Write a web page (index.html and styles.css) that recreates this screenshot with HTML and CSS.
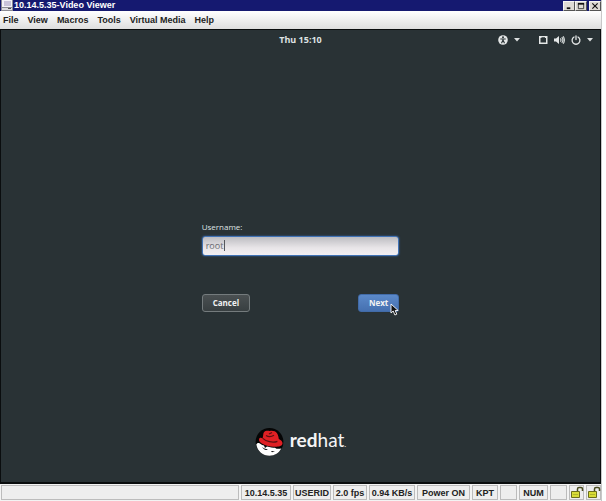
FILE: index.html
```html
<!DOCTYPE html>
<html lang="en">
<head>
<meta charset="utf-8">
<title>10.14.5.35-Video Viewer</title>
<link rel="stylesheet" href="styles.css">
</head>
<body>
<div class="window">
  <header class="titlebar">
    <svg class="app-icon" width="12" height="11" viewBox="0 0 12 11" aria-hidden="true"><path fill="#8b8b93" d="M0 0h12v11H0z"/><path fill="#f4f3f8" d="M1 0h10v7H1z"/><path fill="#c9c4da" d="M3 1h7v5H3z"/><path fill="#dcdce0" d="M1 8h10v2H1z"/><path fill="#555" d="M7 8h3v1H7z"/></svg>
    <h1 class="title">10.14.5.35-Video Viewer</h1>
    <div class="controls">
      <button class="control" aria-label="Minimize"><svg width="11" height="9" viewBox="0 0 11 9"><path fill="#111" d="M3 6h4v2H3z"/></svg></button>
      <button class="control" aria-label="Maximize"><svg width="11" height="9" viewBox="0 0 11 9"><path fill="none" stroke="#333" d="M2.500 2v5.500h6V2"/><path fill="#111" d="M2 1h7v2H2z"/></svg></button>
      <button class="control control-close" aria-label="Close"><svg width="11" height="9" viewBox="0 0 11 9"><path fill="none" stroke="#111" stroke-width="1.300" d="M2.500 1.500l6 6m0-6l-6 6"/></svg></button>
    </div>
  </header>
  <nav class="menubar">
    <button>File</button><button>View</button><button>Macros</button><button>Tools</button><button>Virtual Media</button><button>Help</button>
  </nav>
  <div class="desktop">
    <div class="topbar">
      <time class="clock">Thu 15:10</time>
      <div class="tray">
        <button class="tray-item" aria-label="Accessibility">
          <svg width="10" height="10" viewBox="0 0 10 10"><circle cx="5" cy="5" r="4.800" fill="#e4e7e7"/><circle cx="5" cy="2.200" r="1" fill="#293235"/><path fill="none" stroke="#293235" stroke-width="1.100" d="M2.300 4h5.400M5 3.500v2.300M5 5L3.500 8.300M5 5l1.500 3.300"/></svg>
          <svg width="6" height="4" viewBox="0 0 6 4"><path fill="#dde0e0" d="M0 0h6L3 3.500z"/></svg>
        </button>
        <button class="tray-item" aria-label="System">
          <svg width="10" height="10" viewBox="0 0 10 10"><path fill="#e4e7e7" fill-rule="evenodd" d="M1 1h8.500v8H1zM2.500 3v4.500H8V3H7V2.300H3.500V3z"/></svg>
          <svg width="11" height="10" viewBox="0 0 11 10"><path fill="#e4e7e7" d="M0 3.500h2L5 1v8L2 6.500H0z"/><path fill="none" stroke="#d0d5d5" stroke-width="1.200" d="M6.300 3.300q1.400 1.700 0 3.400M7.800 2.200q2.200 2.800 0 5.600M9.200 1.200q2.400 3.800 0 7.600"/></svg>
          <svg width="10" height="10" viewBox="0 0 10 10"><path fill="none" stroke="#e4e7e7" stroke-width="1.300" stroke-linecap="round" d="M3 2a3.900 3.900 0 1 0 4 0M5 .8v3.700"/></svg>
          <svg width="6" height="4" viewBox="0 0 6 4"><path fill="#dde0e0" d="M0 0h6L3 3.500z"/></svg>
        </button>
      </div>
    </div>
    <main class="greeter">
      <form class="login">
        <label for="username">Username:</label>
        <div class="field"><input id="username" type="text" value="root"><span class="caret"></span></div>
        <div class="actions">
          <button class="btn" type="button">Cancel</button>
          <button class="btn btn-primary" type="button">Next<svg class="pointer" width="10" height="13" viewBox="0 0 10 13" aria-hidden="true"><path fill="#111" stroke="#fff" stroke-width=".9" d="M1 1v9l2.200-2 1.700 4 1.900-.8L5.200 7.500h3z"/></svg></button>
        </div>
      </form>
      <div class="brand">
        <svg width="30" height="30" viewBox="0 0 30 30" aria-hidden="true"><circle cx="14.500" cy="14.800" r="13.900" fill="#050505"/><path fill="#fff" d="M1.300 17.500c.5-1.500 2-2 3.200-1.200 1.500 1 3 2 4.500 2.300l1 2.400 2-1.500c3 1 6 1.200 8 1.200 1.500 1.500 4 1.300 6.300.8C24 26 20 28.700 14.500 28.700 8 28.700 2.500 24.500 1.300 17.500z"/><path fill="#050505" d="M7 20c2 1.600 4 2.100 6 2.300l-1.800.8C9.500 22.800 8 21.500 7 20zM16 24l4 .3-3 1z"/><path fill="#df2024" d="M8.500 6C10 3.200 13 4 15 3.900c3-.3 5.500.2 7 2.400 1.300 2 1.500 4 1.800 5.700 2.500 1 4 3 3.700 4.800-.6 2.700-5 3.300-9.500 2.900C11.500 19.200 3.300 16 4 12.200c.5-1.700 2.200-1.600 3.600-.8z"/><path fill="none" stroke="#5b1011" stroke-width="1.300" d="M7.800 11.400c3 3 10 4.800 14.600 2.900M11 8.500c2.500 1.600 5 1.600 8-.2M14 7l3-1.500"/></svg>
        <span class="wordmark"><b>red</b>hat<small>.</small></span>
      </div>
    </main>
  </div>
  <footer class="statusbar">
    <span class="cell message"></span>
    <span class="cell address">10.14.5.35</span>
    <span class="cell user">USERID</span>
    <span class="cell fps">2.0 fps</span>
    <span class="cell rate">0.94 KB/s</span>
    <span class="cell power">Power ON</span>
    <span class="cell kpt">KPT</span>
    <span class="cell blank"></span>
    <span class="cell num">NUM</span>
    <span class="cell blank"></span>
    <span class="cell lock"><svg width="14" height="13" viewBox="0 0 14 13" role="img" aria-label="Unlocked"><path fill="none" stroke="#4a4c20" stroke-width="1.500" d="M7.500 6V3q0-1.500 1.500-1.500h2q1.500 0 1.500 1.500v2"/><path fill="#d8dc35" stroke="#6b6d1c" d="M1.500 5.500h8v6h-8z"/><path stroke="#b2b52a" d="M3 8.500h5"/></svg></span>
    <span class="cell lock"><svg width="14" height="13" viewBox="0 0 14 13" role="img" aria-label="Unlocked"><path fill="none" stroke="#4a4c20" stroke-width="1.500" d="M7.500 6V3q0-1.500 1.500-1.500h2q1.500 0 1.500 1.500v2"/><path fill="#d8dc35" stroke="#6b6d1c" d="M1.500 5.500h8v6h-8z"/><path stroke="#b2b52a" d="M3 8.500h5"/></svg></span>
  </footer>
</div>
</body>
</html>
```
FILE: styles.css
```css
* { box-sizing: border-box; }
body { margin: 0; background: #fff; font-family: "Liberation Sans", Arial, sans-serif; }
button { border: 0; padding: 0; margin: 0; background: none; color: inherit; font: inherit; }
svg { display: block; flex: none; }

.window {
  display: flex;
  flex-direction: column;
  min-height: 100vh;
  margin-right: 4px;
  border-right: 1px solid #c8c8c8;
  background: #ededed;
}

.titlebar { display: flex; align-items: center; gap: 1px; height: 11px; padding-left: 1px; background: #151970; color: #fff; }
.title { flex: 1; margin: 0; font-size: 9px; line-height: 11px; font-weight: bold; white-space: nowrap; }
.controls { display: flex; align-items: center; }
.control { width: 12px; height: 10px; background: #dedbd5; border: 1px solid #f5f5f5; border-right-color: #555; border-bottom-color: #555; }
.control svg { width: 100%; height: 100%; }
.control-close { margin-left: 2px; }

.menubar { display: flex; align-items: center; gap: 9px; height: 18px; padding-left: 3px; background: linear-gradient(#fff, #dedede); color: #222; font-size: 9px; font-weight: bold; line-height: 18px; }

.desktop { display: flex; flex: 1; flex-direction: column; border: 1px solid #0a0d0e; border-bottom-width: 2px; background: #293235; color: #dfe3e3; font-family: "Open Sans", "Noto Sans", sans-serif; }
.topbar { display: grid; grid-template-columns: 1fr auto 1fr; align-items: center; height: 19px; }
.clock { grid-column: 2; font-size: 9px; font-weight: bold; line-height: 18px; }
.tray { display: flex; justify-content: flex-end; gap: 18px; padding-right: 7px; }
.tray-item { display: flex; align-items: center; gap: 6px; }

.greeter { display: grid; flex: 1; grid-template-rows: 1fr auto 1fr; justify-items: center; }
.login { grid-row: 2; width: 33%; }
.login label { display: block; font-size: 8px; line-height: 14px; }
.field { position: relative; padding: 2px 0 38px; }
.field input { display: block; width: 100%; height: 20px; padding: 0 3px; border: 1px solid #4173b6; border-radius: 3px; outline: 0; background: linear-gradient(#bdbdc2, #e8e5e8 60%, #f2eff2); box-shadow: 0 0 2px #3c6ba9; color: #686a70; font: 9px "Open Sans", "Noto Sans", sans-serif; }
.caret { position: absolute; left: 22px; top: 6px; width: 1px; height: 11px; background: #55575c; }
.actions { display: flex; justify-content: space-between; }
.btn { position: relative; height: 18px; padding: 0 10px; border: 1px solid #747b7d; border-radius: 3px; background: linear-gradient(#4a5052, #383f41); color: #f1f2f2; font-size: 8px; font-weight: bold; line-height: 16px; }
.btn-primary { border-color: #416ba8; background: linear-gradient(#5b89c9, #4570b0); }
.pointer { position: absolute; right: -2px; bottom: -5px; }
.brand { display: flex; grid-row: 3; align-self: end; align-items: flex-end; gap: 5px; margin-bottom: 25px; }
.wordmark { color: #f5f5f5; font-family: Lato, sans-serif; font-size: 19px; line-height: 26px; }
.wordmark b { font-weight: bold; }
.wordmark small { font-size: 8px; }

.statusbar { display: flex; gap: 2px; height: 17px; padding: 1px 0 1px 1px; background: #f3f3f3; color: #222; font-size: 9px; font-weight: bold; }
.cell { display: flex; align-items: center; justify-content: center; height: 15px; border: 1px solid #bcbcbc; background: #eee; white-space: nowrap; }
.message { flex: 1; }
.address { width: 50px; }
.user { width: 38px; }
.fps { width: 34px; }
.rate { width: 46px; }
.power { width: 53px; }
.kpt { width: 26px; }
.blank { width: 17px; }
.num { width: 29px; }
.lock { width: 15px; }
```
